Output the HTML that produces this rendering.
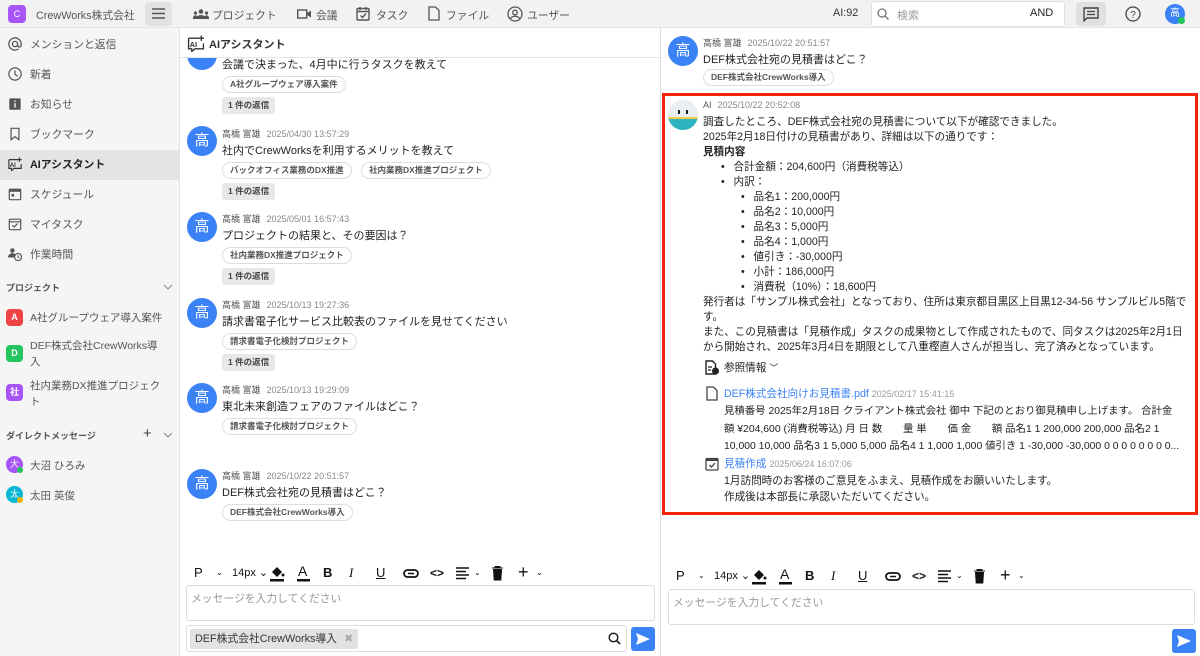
<!DOCTYPE html>
<html><head><meta charset="utf-8"><style>
*{box-sizing:border-box;margin:0;padding:0}
body{width:1200px;height:656px;overflow:hidden;position:relative;background:#fff;font-family:"Liberation Sans","Noto Sans CJK JP",sans-serif;color:#222;font-size:11px}
.a{position:absolute;white-space:nowrap}
#top{position:absolute;left:0;top:0;width:1200px;height:28px;background:#f2f2f2;border-bottom:1px solid #e6e6e6}
#side{position:absolute;left:0;top:28px;width:180px;height:628px;background:#f5f5f5;border-right:1px solid #e3e3e3}
#mid{position:absolute;left:180px;top:28px;width:481px;height:628px;background:#fff;border-right:1px solid #ddd}
.nav{color:#555;font-size:10.8px}
.si{position:absolute;left:8px;color:#555;font-size:10.8px;display:flex;align-items:center;gap:8px}
.sic{width:14px;height:14px;display:inline-block}
.av{position:absolute;width:30px;height:30px;border-radius:50%;background:#3b82f6;color:#fff;font-size:15px;text-align:center;line-height:30px}
.nm{position:absolute;font-size:9px;color:#888;white-space:nowrap}
.nm b{color:#555;font-weight:normal;margin-right:6px}
.msg{position:absolute;font-size:11px;white-space:nowrap;color:#222}
.tag{position:absolute;font-size:8.5px;font-weight:bold;color:#555;border:1px solid #ddd;border-radius:9px;padding:0 7px;height:17px;line-height:15px;white-space:nowrap;background:#fff}
.rep{position:absolute;font-size:8.5px;font-weight:bold;color:#444;background:#e8e8e8;border-radius:3px;padding:0 6px;height:17px;line-height:17px}
.pj{position:absolute;left:6px;width:17px;height:17px;border-radius:4px;color:#fff;font-size:9px;text-align:center;line-height:17px;font-weight:bold}
.tb{position:absolute;font-size:12px;color:#111;display:flex;align-items:center}
.ln{position:absolute;font-size:10.6px;white-space:nowrap;color:#222}
.blu{color:#3b82f6}
.gr{color:#999;font-size:9px}
</style></head><body>
<div id="top">
 <div class="a" style="left:8px;top:5px;width:18px;height:18px;border-radius:4px;background:#a855f7;color:#fff;font-size:9px;text-align:center;line-height:18px">C</div>
 <div class="a nav" style="left:36px;top:7px">CrewWorks株式会社</div>
 <div class="a" style="left:145px;top:2px;width:27px;height:24px;background:#e2e2e2;border-radius:4px"></div>
 <svg class="a" style="left:152px;top:8px" width="13" height="11"><path d="M0 1h13M0 5.5h13M0 10h13" stroke="#555" stroke-width="1.5"/></svg>
 <svg class="a" style="left:193px;top:9px" width="16" height="10"><circle cx="8" cy="2.5" r="2.3" fill="#555"/><circle cx="2.5" cy="4" r="1.6" fill="#555"/><circle cx="13.5" cy="4" r="1.6" fill="#555"/><path d="M3 10a5 4 0 0110 0z" fill="#555"/><path d="M0 10a2.5 3 0 014 -3v3zM16 10a2.5 3 0 00-4 -3v3z" fill="#555"/></svg>
 <div class="a nav" style="left:212px;top:7px">プロジェクト</div>
 <svg class="a" style="left:297px;top:9px" width="14" height="10"><rect x="0.7" y="1" width="9" height="8" fill="none" stroke="#555" stroke-width="1.4"/><path d="M10 4l4-2.5v7l-4-2.5z" fill="#555"/></svg>
 <div class="a nav" style="left:316px;top:7px">会議</div>
 <svg class="a" style="left:356px;top:6px" width="14" height="15"><rect x="1" y="2.5" width="12" height="11.5" rx="1" fill="none" stroke="#555" stroke-width="1.4"/><path d="M1 5.5h12M4 1v3M10 1v3M4.5 9.5l2 2 3.5-4" stroke="#555" stroke-width="1.4" fill="none"/></svg>
 <div class="a nav" style="left:376px;top:7px">タスク</div>
 <svg class="a" style="left:428px;top:6px" width="12" height="15"><path d="M1 1h6.5l3.5 3.5V14H1z" fill="none" stroke="#555" stroke-width="1.3"/></svg>
 <div class="a nav" style="left:446px;top:7px">ファイル</div>
 <svg class="a" style="left:507px;top:6px" width="16" height="16"><circle cx="8" cy="8" r="7" fill="none" stroke="#555" stroke-width="1.3"/><circle cx="8" cy="6.5" r="2.3" fill="none" stroke="#555" stroke-width="1.3"/><path d="M3.5 12.5a5 4 0 019 0" fill="none" stroke="#555" stroke-width="1.3"/></svg>
 <div class="a nav" style="left:527px;top:7px">ユーザー</div>
 <div class="a nav" style="left:833px;top:7px;color:#333">AI:92</div>
 <div class="a" style="left:871px;top:1px;width:194px;height:26px;background:#fff;border:1px solid #e0e0e0;border-radius:3px"></div>
 <svg class="a" style="left:877px;top:8px" width="12" height="12"><circle cx="5" cy="5" r="4" fill="none" stroke="#777" stroke-width="1.3"/><path d="M8 8l3.5 3.5" stroke="#777" stroke-width="1.4"/></svg>
 <div class="a" style="left:897px;top:7px;color:#999">検索</div>
 <div class="a" style="left:1030px;top:7px;color:#222">AND</div>
 <div class="a" style="left:1076px;top:2px;width:30px;height:24px;background:#e0e0e0;border-radius:4px"></div>
 <svg class="a" style="left:1083px;top:7px" width="16" height="15"><path d="M1 1h14v10H4l-3 3z" fill="none" stroke="#444" stroke-width="1.4"/><path d="M4 4.5h8M4 7.5h8" stroke="#444" stroke-width="1.3"/></svg>
 <svg class="a" style="left:1125px;top:6px" width="16" height="16"><circle cx="8" cy="8" r="7" fill="none" stroke="#444" stroke-width="1.3"/><text x="8" y="12" font-size="10" text-anchor="middle" fill="#444" font-family="Liberation Sans">?</text></svg>
 <div class="a" style="left:1165px;top:4px;width:20px;height:20px;border-radius:50%;background:#3b82f6;color:#fff;font-size:10px;text-align:center;line-height:20px">高</div>
 <div class="a" style="left:1178px;top:17px;width:7px;height:7px;border-radius:50%;background:#22c55e"></div>
</div>

<div id="side">
 <div class="a" style="left:0;top:122px;width:179px;height:30px;background:#e4e4e4"></div>
 <div class="si" style="top:8px"><svg class="sic" viewBox="0 0 16 16"><circle cx="8" cy="8" r="3" fill="none" stroke="#555" stroke-width="1.5"/><path d="M11 8v1.5a2 2 0 004 0V8a7 7 0 10-3 5.7" fill="none" stroke="#555" stroke-width="1.5"/></svg>メンションと返信</div>
 <div class="si" style="top:38px"><svg class="sic" viewBox="0 0 16 16"><circle cx="8" cy="8" r="7" fill="none" stroke="#555" stroke-width="1.4"/><path d="M8 4v4.5l3 2" fill="none" stroke="#555" stroke-width="1.4"/></svg>新着</div>
 <div class="si" style="top:68px"><svg class="sic" viewBox="0 0 16 16"><rect x="1.5" y="1.5" width="13" height="13" rx="1" fill="#555"/><path d="M8 7v5M8 4v1.5" stroke="#fff" stroke-width="1.6"/></svg>お知らせ</div>
 <div class="si" style="top:98px"><svg class="sic" viewBox="0 0 16 16"><path d="M3.5 1.5h9v13l-4.5-3.5-4.5 3.5z" fill="none" stroke="#555" stroke-width="1.4"/></svg>ブックマーク</div>
 <div class="si" style="top:128px;color:#222;font-weight:bold"><svg class="sic" viewBox="0 0 16 16"><path d="M1 3h10M1 3v10h3v2.5l3-2.5h8V8" fill="none" stroke="#333" stroke-width="1.3"/><text x="2" y="11.5" font-size="7" font-weight="bold" fill="#333" font-family="Liberation Sans">AI</text><path d="M13 0.5v5M10.5 3h5" stroke="#333" stroke-width="1.3"/></svg>AIアシスタント</div>
 <div class="si" style="top:158px"><svg class="sic" viewBox="0 0 16 16"><rect x="1.5" y="2.5" width="13" height="12" rx="1" fill="none" stroke="#555" stroke-width="1.4"/><rect x="1.5" y="2.5" width="13" height="3" fill="#555"/><rect x="4" y="8" width="3" height="3" fill="#555"/></svg>スケジュール</div>
 <div class="si" style="top:188px"><svg class="sic" viewBox="0 0 16 16"><rect x="1.5" y="2.5" width="13" height="12" rx="1" fill="none" stroke="#555" stroke-width="1.4"/><path d="M1.5 5.5h13M5 9.5l2 2 4-4" fill="none" stroke="#555" stroke-width="1.4"/></svg>マイタスク</div>
 <div class="si" style="top:218px"><svg class="sic" viewBox="0 0 16 16"><circle cx="5" cy="4" r="2.6" fill="#555"/><path d="M0 12a5 5 0 0110 0z" fill="#555"/><circle cx="11.5" cy="11.5" r="4" fill="#f5f5f5" stroke="#555" stroke-width="1.3"/><path d="M11.5 9.5v2l1.5 1" stroke="#555" stroke-width="1.1" fill="none"/></svg>作業時間</div>
 <div class="a" style="left:6px;top:253px;font-size:9px;font-weight:bold;color:#555">プロジェクト</div>
 <svg class="a" style="left:163px;top:256px" width="10" height="6"><path d="M1 1l4 4 4-4" fill="none" stroke="#888" stroke-width="1"/></svg>
 <div class="pj" style="top:281px;background:#ef4444">A</div>
 <div class="a" style="left:30px;top:282px;color:#555;font-size:10.5px">A社グループウェア導入案件</div>
 <div class="pj" style="top:317px;background:#22c55e">D</div>
 <div class="a" style="left:30px;top:310px;color:#555;line-height:16px;font-size:10.5px">DEF株式会社CrewWorks導<br>入</div>
 <div class="pj" style="top:356px;background:#a855f7">社</div>
 <div class="a" style="left:30px;top:350px;color:#555;line-height:16px;font-size:10.5px">社内業務DX推進プロジェク<br>ト</div>
 <div class="a" style="left:6px;top:401px;font-size:9px;font-weight:bold;color:#555">ダイレクトメッセージ</div>
 <div class="a" style="left:143px;top:397px;font-size:15px;color:#444">+</div>
 <svg class="a" style="left:163px;top:404px" width="10" height="6"><path d="M1 1l4 4 4-4" fill="none" stroke="#888" stroke-width="1"/></svg>
 <div class="a" style="left:6px;top:428px;width:17px;height:17px;border-radius:50%;background:#a855f7;color:#fff;font-size:9px;text-align:center;line-height:17px">大</div>
 <div class="a" style="left:17px;top:439px;width:6px;height:6px;border-radius:50%;background:#22c55e"></div>
 <div class="a" style="left:30px;top:430px;color:#555;font-size:10.5px">大沼 ひろみ</div>
 <div class="a" style="left:6px;top:458px;width:17px;height:17px;border-radius:50%;background:#06b6d4;color:#fff;font-size:9px;text-align:center;line-height:17px">太</div>
 <div class="a" style="left:17px;top:469px;width:6px;height:6px;border-radius:50%;background:#eab308"></div>
 <div class="a" style="left:30px;top:460px;color:#555;font-size:10.5px">太田 英俊</div>
</div>

<div id="mid">
 <div class="av" style="left:7px;top:12px"></div>
 <div class="msg" style="left:42px;top:28px">会議で決まった、4月中に行うタスクを教えて</div>
 <div class="tag" style="left:42px;top:48px">A社グループウェア導入案件</div>
 <div class="rep" style="left:42px;top:69px">1 件の返信</div>
 <div class="a" style="left:0;top:0;width:480px;height:30px;background:#fff;border-bottom:1px solid #e5e5e5"></div>
 <svg class="a" style="left:7px;top:7px" width="18" height="17" viewBox="0 0 16 16"><path d="M1 3h10M1 3v10h3v2.5l3-2.5h8V8" fill="none" stroke="#333" stroke-width="1.3"/><text x="2" y="11.5" font-size="7" font-weight="bold" fill="#333" font-family="Liberation Sans">AI</text><path d="M13 0.5v5M10.5 3h5" stroke="#333" stroke-width="1.3"/></svg>
 <div class="a" style="left:29px;top:8px;font-weight:bold;font-size:11px;color:#333">AIアシスタント</div>

 <div class="av" style="left:7px;top:98px">高</div>
 <div class="nm" style="left:42px;top:99px"><b>高橋 富雄</b>2025/04/30 13:57:29</div>
 <div class="msg" style="left:42px;top:114px">社内でCrewWorksを利用するメリットを教えて</div>
 <div class="tag" style="left:42px;top:134px">バックオフィス業務のDX推進</div>
 <div class="tag" style="left:181px;top:134px">社内業務DX推進プロジェクト</div>
 <div class="rep" style="left:42px;top:155px">1 件の返信</div>

 <div class="av" style="left:7px;top:184px">高</div>
 <div class="nm" style="left:42px;top:184px"><b>高橋 富雄</b>2025/05/01 16:57:43</div>
 <div class="msg" style="left:42px;top:199px">プロジェクトの結果と、その要因は？</div>
 <div class="tag" style="left:42px;top:219px">社内業務DX推進プロジェクト</div>
 <div class="rep" style="left:42px;top:240px">1 件の返信</div>

 <div class="av" style="left:7px;top:270px">高</div>
 <div class="nm" style="left:42px;top:270px"><b>高橋 富雄</b>2025/10/13 19:27:36</div>
 <div class="msg" style="left:42px;top:285px">請求書電子化サービス比較表のファイルを見せてください</div>
 <div class="tag" style="left:42px;top:305px">請求書電子化検討プロジェクト</div>
 <div class="rep" style="left:42px;top:326px">1 件の返信</div>

 <div class="av" style="left:7px;top:355px">高</div>
 <div class="nm" style="left:42px;top:355px"><b>高橋 富雄</b>2025/10/13 19:29:09</div>
 <div class="msg" style="left:42px;top:370px">東北未来創造フェアのファイルはどこ？</div>
 <div class="tag" style="left:42px;top:390px">請求書電子化検討プロジェクト</div>

 <div class="av" style="left:7px;top:441px">高</div>
 <div class="nm" style="left:42px;top:441px"><b>高橋 富雄</b>2025/10/22 20:51:57</div>
 <div class="msg" style="left:42px;top:456px">DEF株式会社宛の見積書はどこ？</div>
 <div class="tag" style="left:42px;top:476px">DEF株式会社CrewWorks導入</div>

 <div class="tb" style="left:14px;top:534px;gap:0">
  <span style="font-size:13px;width:22px">P</span><span style="font-size:8px;width:14px">⌄</span>
  <span style="font-size:11px;width:37px;margin-left:2px">14px ⌄</span>
  <svg width="28" height="18"><path d="M3 8l5-5 5 5-5 5z" fill="#111"/><circle cx="14" cy="11" r="1.5" fill="#111"/><rect x="1" y="15" width="14" height="2.5" fill="#111"/></svg>
  <svg width="26" height="18"><text x="1" y="12" font-size="14" fill="#111" font-family="Liberation Sans">A</text><rect x="0" y="15" width="13" height="2.5" fill="#111"/></svg>
  <b style="width:26px;font-size:13px">B</b><i style="width:27px;font-size:13px;font-family:'Liberation Serif'">I</i>
  <span style="width:27px;font-size:13px;text-decoration:underline">U</span>
  <svg width="27" height="14"><rect x="1" y="4" width="14" height="7" rx="3.5" fill="none" stroke="#111" stroke-width="1.7"/><path d="M5 7.5h6" stroke="#111" stroke-width="1.5"/></svg>
  <span style="width:26px;font-size:12px;font-weight:bold">&lt;&gt;</span>
  <svg width="18" height="14"><path d="M0 2h13M0 5.5h10M0 9h13M0 12.5h10" stroke="#111" stroke-width="1.4"/></svg><span style="font-size:8px;width:17px">⌄</span>
  <svg width="27" height="16"><path d="M1 3h11M4 3V1.5h5V3M2.5 4.5h8l-.7 10.5h-6.6z" fill="#111" stroke="#111" stroke-width="1"/></svg>
  <span style="font-size:18px;width:18px">+</span><span style="font-size:8px">⌄</span>
 </div>
 <div class="a" style="left:6px;top:557px;width:469px;height:36px;border:1px solid #ddd;border-radius:3px;color:#999;padding:4px 4px;font-size:10.8px">メッセージを入力してください</div>
 <div class="a" style="left:6px;top:597px;width:441px;height:27px;border:1px solid #ddd;border-radius:3px"></div>
 <div class="a" style="left:10px;top:601px;height:20px;background:#e2e2e2;border-radius:2px;padding:0 5px;line-height:20px;color:#333;font-size:10.8px">DEF株式会社CrewWorks導入 <span style="color:#aaa;margin-left:4px">✖</span></div>
 <svg class="a" style="left:428px;top:604px" width="13" height="13"><circle cx="5.5" cy="5.5" r="4.3" fill="none" stroke="#222" stroke-width="1.5"/><path d="M8.5 8.5l3.5 3.5" stroke="#222" stroke-width="1.7"/></svg>
 <div class="a" style="left:451px;top:599px;width:24px;height:24px;background:#3b82f6;border-radius:3px"></div>
 <svg class="a" style="left:455px;top:604px" width="16" height="14"><path d="M1 1l14 6-14 6 2-6z" fill="#fff"/></svg>
</div>

<!-- right -->
<div class="av" style="left:668px;top:36px">高</div>
<div class="nm" style="left:703px;top:36px"><b>高橋 富雄</b>2025/10/22 20:51:57</div>
<div class="msg" style="left:703px;top:51px">DEF株式会社宛の見積書はどこ？</div>
<div class="tag" style="left:703px;top:69px">DEF株式会社CrewWorks導入</div>

<div class="a" style="left:662px;top:93px;width:536px;height:422px;border:3px solid #f0250d"></div>
<div class="a" style="left:668px;top:100px;width:30px;height:30px;border-radius:50%;overflow:hidden;background:#e8eef2">
 <div style="position:absolute;left:0;top:19px;width:30px;height:11px;background:#2bb3c0"></div>
 <div style="position:absolute;left:0;top:17px;width:30px;height:2px;background:#f3c94a"></div>
 <div style="position:absolute;left:10px;top:10px;width:2px;height:4px;background:#222"></div>
 <div style="position:absolute;left:18px;top:10px;width:2px;height:4px;background:#222"></div>
</div>
<div class="nm" style="left:703px;top:100px"><b>AI</b>2025/10/22 20:52:08</div>
<div class="ln" style="left:703px;top:115px;line-height:15px">
調査したところ、DEF株式会社宛の見積書について以下が確認できました。<br>
2025年2月18日付けの見積書があり、詳細は以下の通りです：<br>
<b>見積内容</b><br>
<span style="padding-left:18px">•&nbsp;&nbsp; 合計金額：204,600円（消費税等込）</span><br>
<span style="padding-left:18px">•&nbsp;&nbsp; 内訳：</span><br>
<span style="padding-left:38px">•&nbsp;&nbsp; 品名1：200,000円</span><br>
<span style="padding-left:38px">•&nbsp;&nbsp; 品名2：10,000円</span><br>
<span style="padding-left:38px">•&nbsp;&nbsp; 品名3：5,000円</span><br>
<span style="padding-left:38px">•&nbsp;&nbsp; 品名4：1,000円</span><br>
<span style="padding-left:38px">•&nbsp;&nbsp; 値引き：-30,000円</span><br>
<span style="padding-left:38px">•&nbsp;&nbsp; 小計：186,000円</span><br>
<span style="padding-left:38px">•&nbsp;&nbsp; 消費税（10%）：18,600円</span><br>
発行者は「サンプル株式会社」となっており、住所は東京都目黒区上目黒12-34-56 サンプルビル5階で<br>
す。<br>
また、この見積書は「見積作成」タスクの成果物として作成されたもので、同タスクは2025年2月1日<br>
から開始され、2025年3月4日を期限として八重樫直人さんが担当し、完了済みとなっています。
</div>
<svg class="a" style="left:705px;top:360px" width="14" height="15"><path d="M1 1h6.5l3 3V14H1z" fill="none" stroke="#222" stroke-width="1.4"/><path d="M3 7h4M3 10h3" stroke="#222" stroke-width="1.2"/><circle cx="10.5" cy="11" r="3.5" fill="#222"/></svg>
<div class="ln" style="left:724px;top:360px">参照情報 <span style="font-size:9px">﹀</span></div>
<svg class="a" style="left:706px;top:386px" width="12" height="15"><path d="M1 1h6.5l3.5 3.5V14H1z" fill="none" stroke="#444" stroke-width="1.3"/></svg>
<div class="ln" style="left:724px;top:386px"><span class="blu">DEF株式会社向けお見積書.pdf</span> <span class="gr">2025/02/17 15:41:15</span></div>
<div class="ln" style="left:724px;top:403px;line-height:17.5px;font-size:10.4px">見積番号 2025年2月18日 クライアント株式会社 御中 下記のとおり御見積申し上げます。 合計金<br>額 ¥204,600 (消費税等込) 月 日 数　　量 単　　価 金　　額 品名1 1 200,000 200,000 品名2 1<br>10,000 10,000 品名3 1 5,000 5,000 品名4 1 1,000 1,000 値引き 1 -30,000 -30,000 0 0 0 0 0 0 0 0...</div>
<svg class="a" style="left:705px;top:456px" width="14" height="15"><rect x="1" y="2.5" width="12" height="11.5" rx="1" fill="none" stroke="#444" stroke-width="1.3"/><rect x="1" y="2.5" width="12" height="2.5" fill="#444"/><path d="M4.5 9l2 2 3.5-4" stroke="#444" stroke-width="1.3" fill="none"/></svg>
<div class="ln" style="left:724px;top:456px"><span class="blu">見積作成</span> <span class="gr">2025/06/24 16:07:06</span></div>
<div class="ln" style="left:724px;top:473px;line-height:16px">1月訪問時のお客様のご意見をふまえ、見積作成をお願いいたします。<br>作成後は本部長に承認いただいてください。</div>

<div class="tb" style="left:676px;top:565px;gap:0">
  <span style="font-size:13px;width:22px">P</span><span style="font-size:8px;width:14px">⌄</span>
  <span style="font-size:11px;width:37px;margin-left:2px">14px ⌄</span>
  <svg width="28" height="18"><path d="M3 8l5-5 5 5-5 5z" fill="#111"/><circle cx="14" cy="11" r="1.5" fill="#111"/><rect x="1" y="15" width="14" height="2.5" fill="#111"/></svg>
  <svg width="26" height="18"><text x="1" y="12" font-size="14" fill="#111" font-family="Liberation Sans">A</text><rect x="0" y="15" width="13" height="2.5" fill="#111"/></svg>
  <b style="width:26px;font-size:13px">B</b><i style="width:27px;font-size:13px;font-family:'Liberation Serif'">I</i>
  <span style="width:27px;font-size:13px;text-decoration:underline">U</span>
  <svg width="27" height="14"><rect x="1" y="4" width="14" height="7" rx="3.5" fill="none" stroke="#111" stroke-width="1.7"/><path d="M5 7.5h6" stroke="#111" stroke-width="1.5"/></svg>
  <span style="width:26px;font-size:12px;font-weight:bold">&lt;&gt;</span>
  <svg width="18" height="14"><path d="M0 2h13M0 5.5h10M0 9h13M0 12.5h10" stroke="#111" stroke-width="1.4"/></svg><span style="font-size:8px;width:17px">⌄</span>
  <svg width="27" height="16"><path d="M1 3h11M4 3V1.5h5V3M2.5 4.5h8l-.7 10.5h-6.6z" fill="#111" stroke="#111" stroke-width="1"/></svg>
  <span style="font-size:18px;width:18px">+</span><span style="font-size:8px">⌄</span>
</div>
<div class="a" style="left:668px;top:589px;width:527px;height:36px;border:1px solid #ddd;border-radius:3px;color:#999;padding:4px 4px;font-size:10.8px">メッセージを入力してください</div>
<div class="a" style="left:1172px;top:629px;width:24px;height:24px;background:#3b82f6;border-radius:3px"></div>
<svg class="a" style="left:1176px;top:634px" width="16" height="14"><path d="M1 1l14 6-14 6 2-6z" fill="#fff"/></svg>
</body></html>
